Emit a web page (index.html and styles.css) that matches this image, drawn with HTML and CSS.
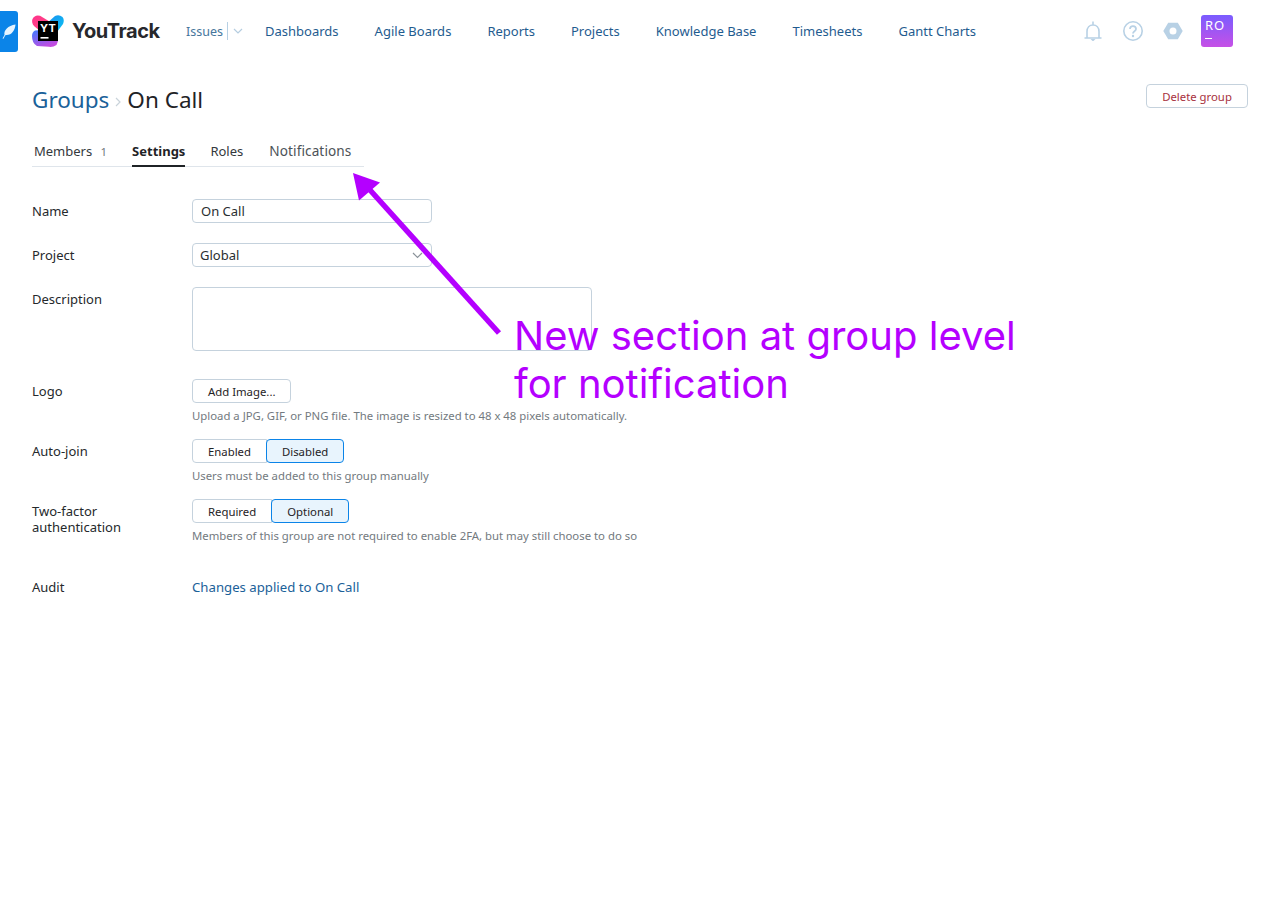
FILE: index.html
```html
<!DOCTYPE html>
<html lang="en">
<head>
<meta charset="utf-8">
<title>On Call</title>
<link rel="stylesheet" href="styles.css">
</head>
<body>
<header class="topbar">
  <div class="feather-tab">
    <svg width="14" height="15" viewBox="0 0 14 15"><path d="M0.500 14.500 L2.500 11 C1.500 6.500 6 1.500 13.500 0.500 C13 6 10 11 4.500 11 L3.300 11.300 L1.500 14.800 Z" fill="#e6f4ff"/></svg>
  </div>
  <a class="logo">
    <svg class="logo-mark" width="32" height="32" viewBox="0 0 32 32">
      <defs>
        <linearGradient id="lgA" x1="0" y1="0" x2="1" y2="1"><stop offset="0" stop-color="#ff318c"/><stop offset="1" stop-color="#ff4f80"/></linearGradient>
        <linearGradient id="lgB" x1="0" y1="0" x2="1" y2="1"><stop offset="0" stop-color="#1f8ef0"/><stop offset="1" stop-color="#07c3f2"/></linearGradient>
        <linearGradient id="lgC" x1="0" y1="0" x2="0.600" y2="1"><stop offset="0" stop-color="#3d7cff"/><stop offset="1" stop-color="#c44be0"/></linearGradient>
      </defs>
      <path d="M14 9 L23 1 Q27 -0.800 30.500 2 Q32.800 5 31 9 L25 17 Z" fill="url(#lgB)"/>
      <path d="M0.500 4 Q3 -0.800 8 0.800 L20 8 L8 16 L2 11 Q-0.800 7.500 0.500 4 Z" fill="url(#lgA)"/>
      <path d="M0 21 Q0 17 3 15.500 L10 15 L26 26 L24.500 30 Q21 32.300 17 31.800 L5 31 Q0 28.500 0 21 Z" fill="url(#lgC)"/>
      <rect x="6" y="6" width="20" height="20" fill="#000"/>
      <rect x="8.500" y="22" width="8" height="1.600" fill="#fff"/>
      <text x="8" y="17" class="logo-yt">YT</text>
    </svg>
    <span class="logo-text">YouTrack</span>
  </a>
  <nav class="nav">
    <a class="nav-item issues">Issues</a>
    <span class="nav-split"></span>
    <svg class="nav-chev" width="10" height="6" viewBox="0 0 10 6"><path d="M1 1 L5 5 L9 1" fill="none" stroke="#b5cde0" stroke-width="1.200"/></svg>
    <a class="nav-item">Dashboards</a>
    <a class="nav-item">Agile Boards</a>
    <a class="nav-item">Reports</a>
    <a class="nav-item">Projects</a>
    <a class="nav-item">Knowledge Base</a>
    <a class="nav-item">Timesheets</a>
    <a class="nav-item">Gantt Charts</a>
  </nav>
  <div class="tools">
    <svg class="tool" width="20" height="20" viewBox="0 0 20 20" fill="none" stroke="#b8d1e5" stroke-width="1.600"><path d="M1.500 17 H18.500 M4 17 V10.500 C4 6.500 6.500 4 10 4 C13.500 4 16 6.500 16 10.500 V17 M10 0.500 V4"/><path d="M7.500 18 H12.500 L10 20.500 Z" fill="#b8d1e5" stroke="none"/></svg>
    <svg class="tool" width="20" height="20" viewBox="0 0 20 20" fill="none" stroke="#b8d1e5" stroke-width="1.600"><circle cx="10" cy="10" r="9.200"/><path d="M7 8 C7 3.800 13 4.500 13 8 C13 10.500 10 10 10 12.500" stroke-width="1.800"/><circle cx="10" cy="15" r="1.200" fill="#b8d1e5" stroke="none"/></svg>
    <svg class="tool" width="20" height="20" viewBox="0 0 20 20"><path fill-rule="evenodd" d="M5.200 1.800 H14.800 L19.700 10 L14.800 18.200 H5.200 L0.300 10 Z M10 6.500 A3.500 3.500 0 1 0 10 13.500 A3.500 3.500 0 1 0 10 6.500 Z" fill="#b8d1e5"/></svg>
    <div class="avatar"><span class="avatar-text">RO</span><span class="avatar-line"></span></div>
  </div>
</header>

<main class="page">
  <div class="title-row">
    <h1 class="title"><a class="crumb">Groups</a><svg class="crumb-sep" width="6" height="10" viewBox="0 0 6 10"><path d="M1 1 L5 5 L1 9" fill="none" stroke="#c9d3da" stroke-width="1.200"/></svg><span>On Call</span></h1>
    <button class="btn btn-danger">Delete group</button>
  </div>

  <div class="tabs">
    <a class="tab tab-members">Members <span class="count">1</span></a>
    <a class="tab tab-active">Settings</a>
    <a class="tab">Roles</a>
    <a class="tab tab-new">Notifications</a>
  </div>

  <form class="form">
    <div class="row row-name">
      <div class="label">Name</div>
      <div class="input">On Call</div>
    </div>
    <div class="row row-project">
      <div class="label">Project</div>
      <div class="input select">Global
        <svg class="select-chev" width="11" height="7" viewBox="0 0 11 7"><path d="M1 1 L5.500 5.500 L10 1" fill="none" stroke="#8a9299" stroke-width="1.200"/></svg>
      </div>
    </div>
    <div class="row row-desc">
      <div class="label">Description</div>
      <div class="textarea"></div>
    </div>
    <div class="row row-logo">
      <div class="label">Logo</div>
      <div>
        <button type="button" class="btn">Add Image...</button>
        <div class="hint">Upload a JPG, GIF, or PNG file. The image is resized to 48 x 48 pixels automatically.</div>
      </div>
    </div>
    <div class="row row-join">
      <div class="label">Auto-join</div>
      <div>
        <div class="seg"><button type="button" class="seg-btn">Enabled</button><button type="button" class="seg-btn seg-on">Disabled</button></div>
        <div class="hint">Users must be added to this group manually</div>
      </div>
    </div>
    <div class="row row-2fa">
      <div class="label">Two-factor<br>authentication</div>
      <div>
        <div class="seg"><button type="button" class="seg-btn">Required</button><button type="button" class="seg-btn seg-on">Optional</button></div>
        <div class="hint">Members of this group are not required to enable 2FA, but may still choose to do so</div>
      </div>
    </div>
    <div class="row row-audit">
      <div class="label">Audit</div>
      <a class="link">Changes applied to On Call</a>
    </div>
  </form>
</main>

<svg class="arrow" width="160" height="175" viewBox="0 0 160 175">
  <path d="M146 160 L17 17" stroke="#b400ff" stroke-width="5.500" fill="none"/>
  <path d="M0 0 L27 9.500 L6 27.500 Z" fill="#b400ff"/>
</svg>
<div class="note">New section at group level<br>for notification</div>
</body>
</html>
```

FILE: styles.css
```css
* { box-sizing: border-box; }
html, body { margin: 0; padding: 0; }
body {
  width: 1280px;
  height: 912px;
  position: relative;
  overflow: hidden;
  background: #fff;
  color: #1f2326;
  font-family: "Noto Sans", sans-serif;
  font-size: 13px;
}
.topbar {
  display: flex;
  align-items: center;
  height: 62px;
  position: relative;
}
.feather-tab {
  width: 18px;
  height: 41px;
  background: #0b84e8;
  border-radius: 0 3px 3px 0;
  display: flex;
  align-items: center;
  justify-content: center;
  padding-right: 1px;
}
.logo {
  display: flex;
  align-items: center;
  margin-left: 14px;
  width: 154px;
}
.logo-mark { flex: none; overflow: visible; }
.logo-yt { font: 700 11px "Inter", sans-serif; fill: #fff; letter-spacing: 0.300px; }
.logo-text {
  margin-left: 8px;
  font: 700 20px "Inter", sans-serif;
  letter-spacing: -0.450px;
  color: #27282c;
}
.nav {
  display: flex;
  align-items: center;
  color: #1f5c8f;
  font-size: 13.030px;
}
.nav-item { margin-right: 36px; white-space: nowrap; }
.issues { margin-right: 4px; color: #46769c; font-size: 12.500px; }
.nav-split { width: 1px; height: 18px; background: #b7d0e4; margin-right: 5px; }
.nav-chev { margin-right: 22px; }
.tools {
  position: absolute;
  left: 1083px;
  top: 15px;
  display: flex;
  align-items: center;
  height: 32px;
}
.tool { margin-right: 20px; }
.tool:nth-child(3) { margin-right: 18px; }
.avatar {
  width: 32px;
  height: 32px;
  border-radius: 3px;
  background: linear-gradient(180deg, #7a5cff, #c650e6);
  color: #fff;
  padding: 3px 4px;
  display: flex;
  flex-direction: column;
  font-size: 13px;
  line-height: 15px;
  letter-spacing: 0.800px;
}
.avatar-line { width: 7px; height: 1px; background: #fff; margin-top: 5px; }
.page { padding: 0 32px; }
.title-row {
  display: flex;
  justify-content: space-between;
  align-items: flex-start;
  height: 81px;
  padding-top: 22px;
}
.title {
  margin: 0;
  font-weight: 400;
  font-size: 22.500px;
  line-height: 32px;
  display: flex;
  align-items: center;
}
.crumb { color: #1a6199; }
.crumb-sep { margin: 3px 6px 0 6px; }
.btn {
  font: inherit;
  font-size: 11.350px;
  height: 24px;
  padding: 0 15px;
  background: #fff;
  border: 1px solid #c5d2dd;
  border-radius: 4px;
  color: #1f2326;
  line-height: 24px;
}
.btn-danger { color: #a83240; width: 102px; padding: 0; }
.tabs {
  display: flex;
  width: 332px;
  height: 24px;
  border-bottom: 1px solid #dfe5eb;
}
.tab {
  height: 24px;
  line-height: 16px;
  margin-right: 25px;
  font-size: 13px;
  color: #34393d;
  white-space: nowrap;
}
.tab-members { margin-left: 2px; margin-right: 25px; }
.count { color: #737a80; font-size: 11.350px; margin-left: 5px; }
.tab-active { font-weight: 700; color: #1f2326; border-bottom: 2px solid #1f2326; }
.tab-new { font-size: 13.600px; letter-spacing: 0.100px; color: #4c5257; margin-left: 1px; }
.form { margin-top: 32px; }
.row { display: flex; align-items: flex-start; }
.label { width: 160px; line-height: 16px; font-size: 13px; padding-top: 4px; color: #25292c; }
.input {
  width: 240px;
  height: 24px;
  border: 1px solid #c5d2dd;
  border-radius: 4px;
  padding: 0 8px;
  line-height: 22px;
  font-size: 13px;
  position: relative;
  color: #2a2e31;
}
.select { padding-left: 7px; }
.select-chev { position: absolute; right: 8px; top: 8px; }
.textarea {
  width: 400px;
  height: 64px;
  border: 1px solid #c5d2dd;
  border-radius: 4px;
}
.row-name, .row-project { height: 44px; }
.row-desc { height: 92px; }
.row-logo { height: 60px; }
.row-join { height: 60px; }
.row-2fa { height: 76px; }
.hint { margin-top: 5px; font-size: 11.350px; line-height: 16px; color: #737a80; white-space: nowrap; }
.seg { display: flex; }
.seg-btn {
  font: inherit;
  font-size: 11.350px;
  height: 24px;
  padding: 0 15px;
  background: #fff;
  border: 1px solid #c5d2dd;
  border-radius: 4px 0 0 4px;
  color: #1f2326;
}
.seg-on {
  margin-left: -1px;
  background: #e8f4fd;
  border-color: #0b84e8;
  border-radius: 4px;
}
.link { color: #1a6199; line-height: 16px; padding-top: 4px; font-size: 13.200px; }
.arrow { position: absolute; left: 353px; top: 173px; }
.note {
  position: absolute;
  left: 514px;
  top: 312px;
  font: 400 40px/48px "Inter", sans-serif;
  color: #b400ff;
  white-space: nowrap;
}
```
